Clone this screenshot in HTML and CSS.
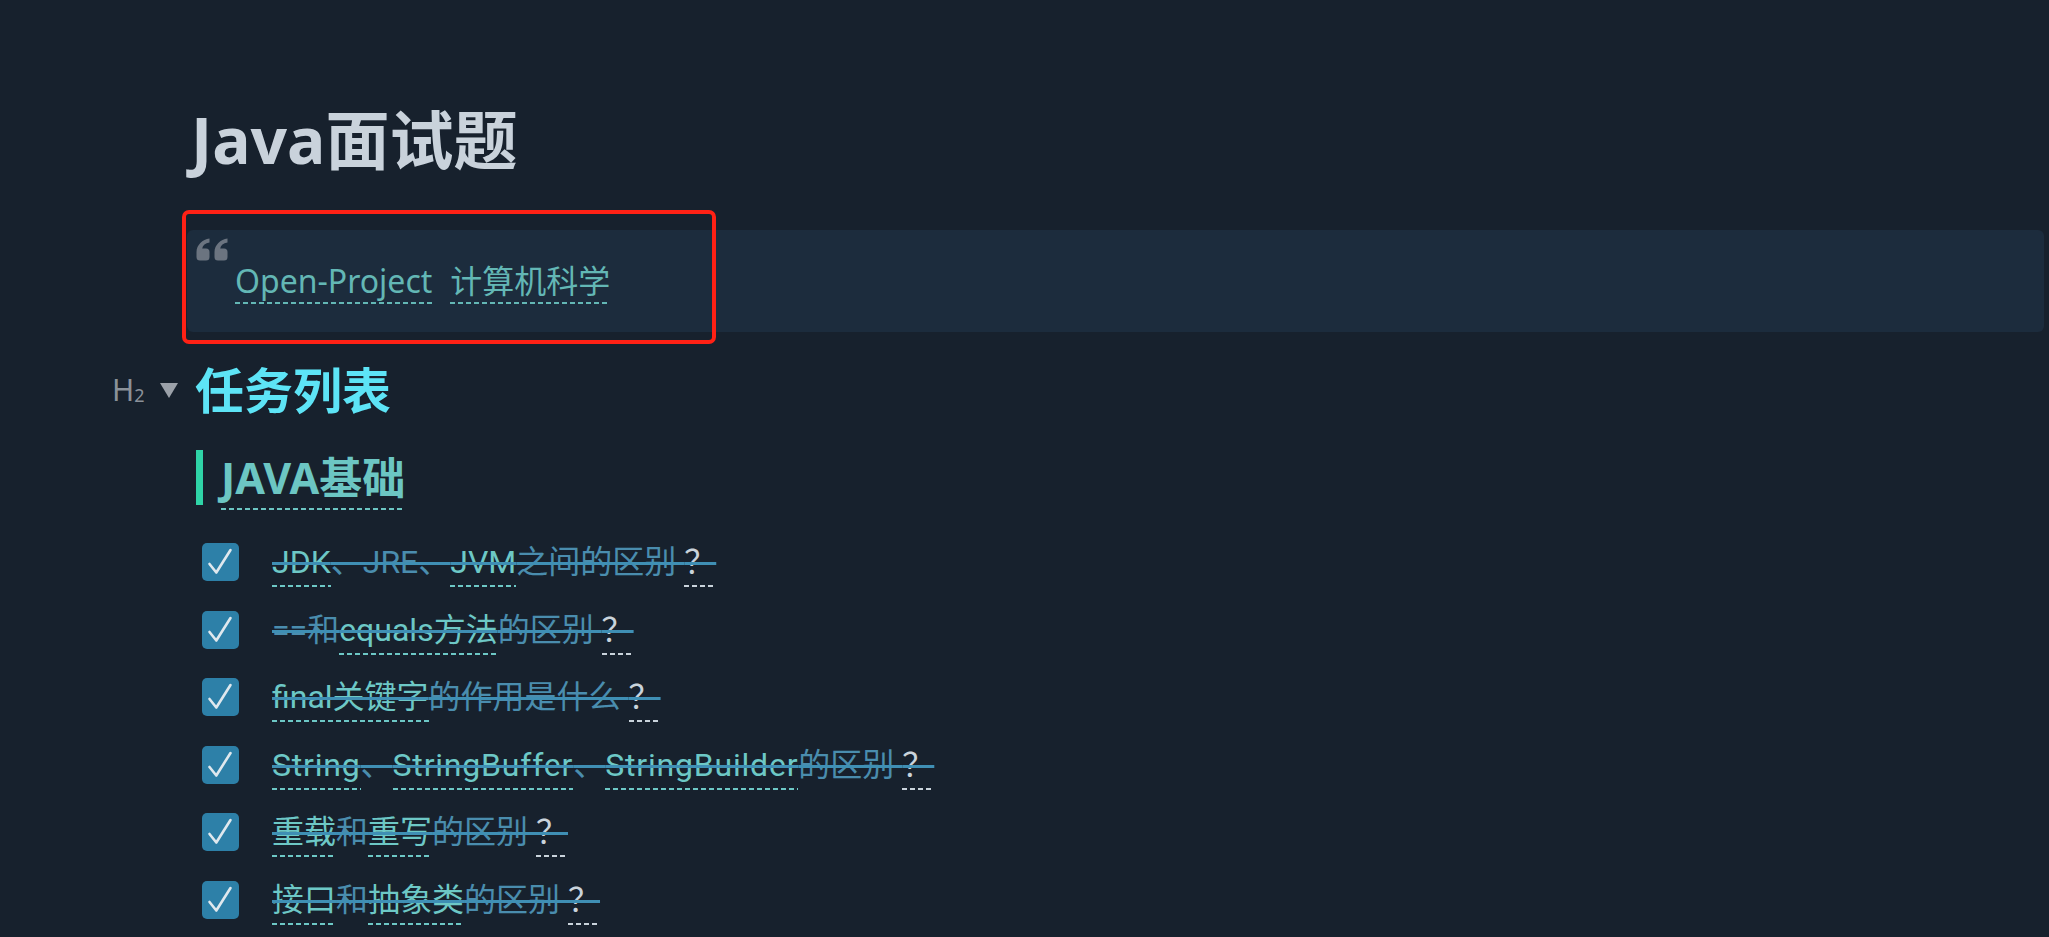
FILE: index.html
```html
<!DOCTYPE html>
<html lang="zh-CN">
<head>
    <meta charset="UTF-8">
    <meta name="viewport" content="width=device-width, initial-scale=1.0">
    <title>Java面试题</title>
    <link rel="stylesheet" href="styles.css">
</head>
<body>

    <div class="page">
        <div class="mark-box"></div>

        <h1 class="title">Java面试题</h1>

        <blockquote class="quote">
            <svg class="quote-icon" viewBox="0 0 32 23">
                <path d="M13.5 0.5C6.5 1.5 0.5 7 0.5 14L0.5 19Q0.5 22.5 4 22.5L10 22.5Q13.5 22.5 13.5 19L13.5 14Q13.5 10.5 10 10.5L6.2 10.5C6.8 7.2 9.2 5.2 13.5 4.6Z"/>
                <path d="M31.5 0.5C24.5 1.5 18.5 7 18.5 14L18.5 19Q18.5 22.5 22 22.5L28 22.5Q31.5 22.5 31.5 19L31.5 14Q31.5 10.5 28 10.5L24.2 10.5C24.8 7.2 27.2 5.2 31.5 4.6Z"/>
            </svg>
            <p><a class="ref" href="#">Open-Project</a><a class="ref" href="#">计算机科学</a></p>
        </blockquote>

        <div class="h2-row">
            <span class="gutter">
                <span class="hlabel">H<sub>2</sub></span>
                <svg class="fold" viewBox="0 0 18 15"><polygon points="0,0 18,0 9,15"/></svg>
            </span>
            <h2 class="h2">任务列表</h2>
        </div>

        <h3 class="section"><a class="ref" href="#">JAVA基础</a></h3>

        <ul class="tasks">
            <li class="task">
                <span class="check"><svg viewBox="0 0 37 38"><polyline points="7.5,21 14.3,29.5 28.5,7"/></svg></span>
                <del><a class="ref" href="#">JDK</a>、JRE、<a class="ref" href="#">JVM</a>之间的区别 <a class="ref q" href="#">？</a></del>
            </li>
            <li class="task">
                <span class="check"><svg viewBox="0 0 37 38"><polyline points="7.5,21 14.3,29.5 28.5,7"/></svg></span>
                <del>==和<a class="ref" href="#">equals方法</a>的区别 <a class="ref q" href="#">？</a></del>
            </li>
            <li class="task">
                <span class="check"><svg viewBox="0 0 37 38"><polyline points="7.5,21 14.3,29.5 28.5,7"/></svg></span>
                <del><a class="ref" href="#">final关键字</a>的作用是什么 <a class="ref q" href="#">？</a></del>
            </li>
            <li class="task">
                <span class="check"><svg viewBox="0 0 37 38"><polyline points="7.5,21 14.3,29.5 28.5,7"/></svg></span>
                <del><a class="ref en" href="#">String</a>、<a class="ref en" href="#">StringBuffer</a>、<a class="ref en" href="#">StringBuilder</a>的区别 <a class="ref q" href="#">？</a></del>
            </li>
            <li class="task">
                <span class="check"><svg viewBox="0 0 37 38"><polyline points="7.5,21 14.3,29.5 28.5,7"/></svg></span>
                <del><a class="ref" href="#">重载</a>和<a class="ref" href="#">重写</a>的区别 <a class="ref q" href="#">？</a></del>
            </li>
            <li class="task">
                <span class="check"><svg viewBox="0 0 37 38"><polyline points="7.5,21 14.3,29.5 28.5,7"/></svg></span>
                <del><a class="ref" href="#">接口</a>和<a class="ref" href="#">抽象类</a>的区别 <a class="ref q" href="#">？</a></del>
            </li>
        </ul>
    </div>

</body>
</html>
```

FILE: styles.css
```css
body {
    margin: 0;
    background: #17212d;
    font-family: "Noto Sans", "Noto Sans CJK SC", sans-serif;
    overflow: hidden;
}

.page {
    position: relative;
    padding: 100px 5px 0 187px;
    min-height: 937px;
    box-sizing: border-box;
}

/* red annotation frame drawn over the quote */
.mark-box {
    position: absolute;
    left: 182px;
    top: 210px;
    width: 534px;
    height: 134px;
    box-sizing: border-box;
    border: 4px solid #ff2115;
    border-radius: 7px;
    z-index: 2;
}

.title {
    margin: 0;
    padding-left: 4px;
    font-size: 64px;
    line-height: 80px;
    font-weight: 700;
    color: #c9d2db;
}

.ref {
    color: inherit;
    text-decoration: none;
    padding-bottom: 3px;
    background: linear-gradient(to right, currentColor 5px, transparent 5px) 0 100% / 8px 2px repeat-x;
}

.quote {
    margin: 50px 0 0;
    padding: 8px 0 28px 9px;
    background: #1c2c3d;
    border-radius: 6px;
}

.quote-icon {
    display: block;
    width: 32px;
    height: 23px;
    fill: #6b7480;
}

.quote p {
    display: flex;
    gap: 18px;
    margin: 0 0 0 39px;
    font-size: 32px;
    line-height: 40px;
    color: #63b7b5;
}

.h2-row {
    display: flex;
    align-items: center;
    margin: 28px 0 0 -75px;
}

.gutter {
    display: flex;
    align-items: center;
    width: 83px;
    flex: none;
    color: #8b9199;
}

.hlabel {
    font-size: 30px;
    line-height: 1;
}

.hlabel sub {
    font-size: 18px;
    vertical-align: -1px;
}

.fold {
    width: 18px;
    height: 15px;
    margin-left: 15px;
    fill: #9ba1a9;
}

.h2 {
    margin: 0;
    font-size: 49px;
    line-height: 60px;
    font-weight: 700;
    color: #5de4f6;
}

.section {
    margin: 30px 0 0 9px;
    padding-left: 18px;
    border-left: 7px solid #2fd4a7;
    font-size: 43px;
    line-height: 55px;
    font-weight: 700;
    color: #6cc6c3;
}

.section .ref {
    padding-bottom: 3px;
}

.tasks {
    list-style: none;
    margin: 33px 0 0;
    padding: 0;
}

.task {
    display: flex;
    align-items: center;
    height: 48px;
    margin-bottom: 19.6px;
}

.check {
    display: flex;
    flex: none;
    width: 37px;
    height: 38px;
    margin: 0 33px 0 15px;
    background: #2d80a8;
    border-radius: 5px;
}

.check svg {
    width: 37px;
    height: 38px;
    fill: none;
    stroke: #dfe8ee;
    stroke-width: 2.6;
    stroke-linecap: round;
    stroke-linejoin: round;
}

.task del {
    font-family: Roboto, "Noto Sans CJK SC", sans-serif;
    font-size: 32px;
    line-height: 48px;
    color: #4a8dae;
    text-decoration: line-through 3px #3f8fb4;
}

.task .ref {
    color: #6dc8c6;
    padding-bottom: 6px;
}

.task .en {
    letter-spacing: 0.8px;
}

.task .q {
    color: #c9d3db;
}
```
